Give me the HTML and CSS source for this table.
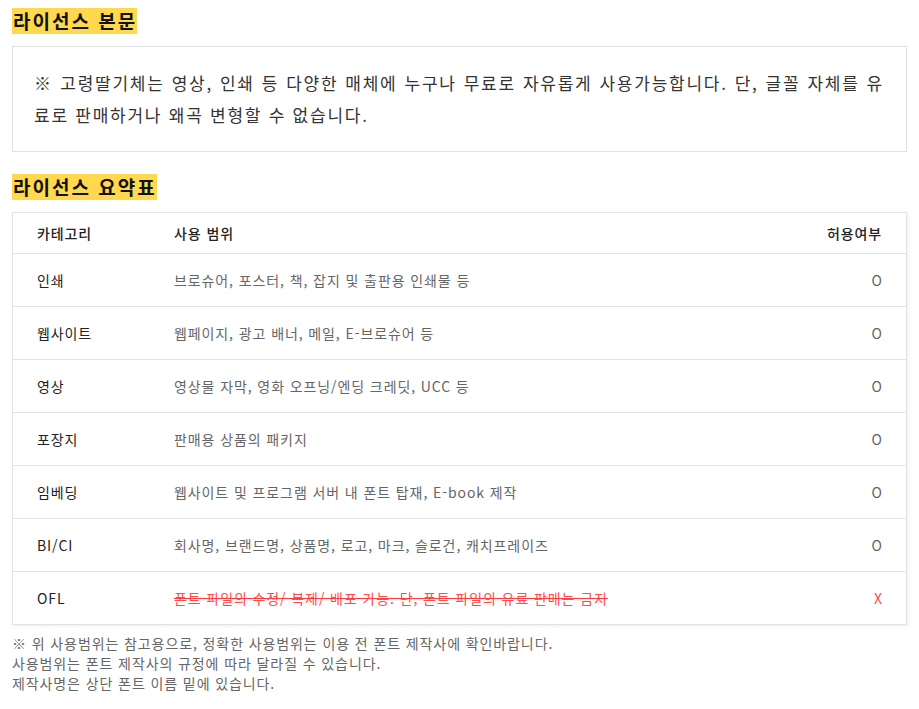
FILE: index.html
```html
<!DOCTYPE html>
<html lang="ko">
<head>
<meta charset="utf-8">
<title>라이선스</title>
<link rel="stylesheet" href="styles.css">
</head>
<body>
<section class="section">
  <h2 class="title"><span class="mark">라이선스 본문</span></h2>
  <div class="license-box">
    <p>※ 고령딸기체는 영상, 인쇄 등 다양한 매체에 누구나 무료로 자유롭게 사용가능합니다. 단, 글꼴 자체를 유료로 판매하거나 왜곡 변형할 수 없습니다.</p>
  </div>
</section>
<section class="section">
  <h2 class="title"><span class="mark">라이선스 요약표</span></h2>
  <div class="table-box">
    <table class="summary">
      <thead>
        <tr><th class="c1">카테고리</th><th class="c2">사용 범위</th><th class="c3">허용여부</th></tr>
      </thead>
      <tbody>
        <tr><td class="c1">인쇄</td><td class="c2">브로슈어, 포스터, 책, 잡지 및 출판용 인쇄물 등</td><td class="c3">O</td></tr>
        <tr><td class="c1">웹사이트</td><td class="c2">웹페이지, 광고 배너, 메일, E-브로슈어 등</td><td class="c3">O</td></tr>
        <tr><td class="c1">영상</td><td class="c2">영상물 자막, 영화 오프닝/엔딩 크레딧, UCC 등</td><td class="c3">O</td></tr>
        <tr><td class="c1">포장지</td><td class="c2">판매용 상품의 패키지</td><td class="c3">O</td></tr>
        <tr><td class="c1">임베딩</td><td class="c2">웹사이트 및 프로그램 서버 내 폰트 탑재, E-book 제작</td><td class="c3">O</td></tr>
        <tr><td class="c1">BI/CI</td><td class="c2">회사명, 브랜드명, 상품명, 로고, 마크, 슬로건, 캐치프레이즈</td><td class="c3">O</td></tr>
        <tr><td class="c1">OFL</td><td class="c2"><span class="strike">폰트 파일의 수정/ 복제/ 배포 가능. 단, 폰트 파일의 유료 판매는 금지</span></td><td class="c3 no">X</td></tr>
      </tbody>
    </table>
  </div>
  <p class="note">※ 위 사용범위는 참고용으로, 정확한 사용범위는 이용 전 폰트 제작사에 확인바랍니다.<br>사용범위는 폰트 제작사의 규정에 따라 달라질 수 있습니다.<br>제작사명은 상단 폰트 이름 밑에 있습니다.</p>
</section>
</body>
</html>
```
FILE: styles.css
```css
html, body {
  margin: 0;
  padding: 0;
  background: #fff;
}
body {
  padding: 8px 12px 0 12px;
  font-family: "Noto Sans CJK KR", "Noto Sans", sans-serif;
  color: #333;
}
.section {
  margin-bottom: 22px;
}
.title {
  margin: 0 0 12px 0;
  font-size: 19px;
  font-weight: 700;
  line-height: 26px;
  height: 26px;
  color: #111;
}
.mark {
  display: inline-block;
  background: #ffd84d;
  padding: 0 0 0 1px;
  letter-spacing: 2px;
}
.license-box {
  border: 1px solid #e1e1e1;
  padding: 20px 22px 20px 21px;
}
.license-box p {
  margin: 0;
  font-size: 17px;
  line-height: 32px;
  text-align: justify;
  color: #333;
  letter-spacing: 1.75px;
}
.table-box {
  border: 1px solid #e3e3e3;
  box-shadow: 1px 1px 3px rgba(0, 0, 0, 0.08);
}
.summary {
  width: 100%;
  border-collapse: collapse;
  font-size: 14px;
  letter-spacing: 0.9px;
}
.summary th {
  font-weight: 500;
  color: #222;
  height: 40px;
  padding: 0;
  text-align: left;
  border-bottom: 1px solid #e3e3e3;
}
.summary td {
  height: 52px;
  padding: 0;
  border-bottom: 1px solid #e3e3e3;
}
.summary tbody tr:last-child td {
  border-bottom: none;
}
.c1 {
  width: 137px;
  padding-left: 24px !important;
  color: #222;
}
.c2 {
  color: #666;
}
.summary th.c2 {
  color: #222;
}
.c3 {
  text-align: right !important;
  padding-right: 24px !important;
  color: #666;
  width: 80px;
  letter-spacing: 0;
}
.summary th.c3 {
  color: #222;
  letter-spacing: 0.9px;
}
.c3.no {
  color: #ff4b4b;
}
.strike {
  color: #ff4b4b;
  text-decoration: line-through;
  text-decoration-color: #ff3b3b;
}
.note {
  margin: 8px 0 0 0;
  font-size: 14px;
  line-height: 20px;
  color: #666;
  letter-spacing: 0.9px;
}
```
